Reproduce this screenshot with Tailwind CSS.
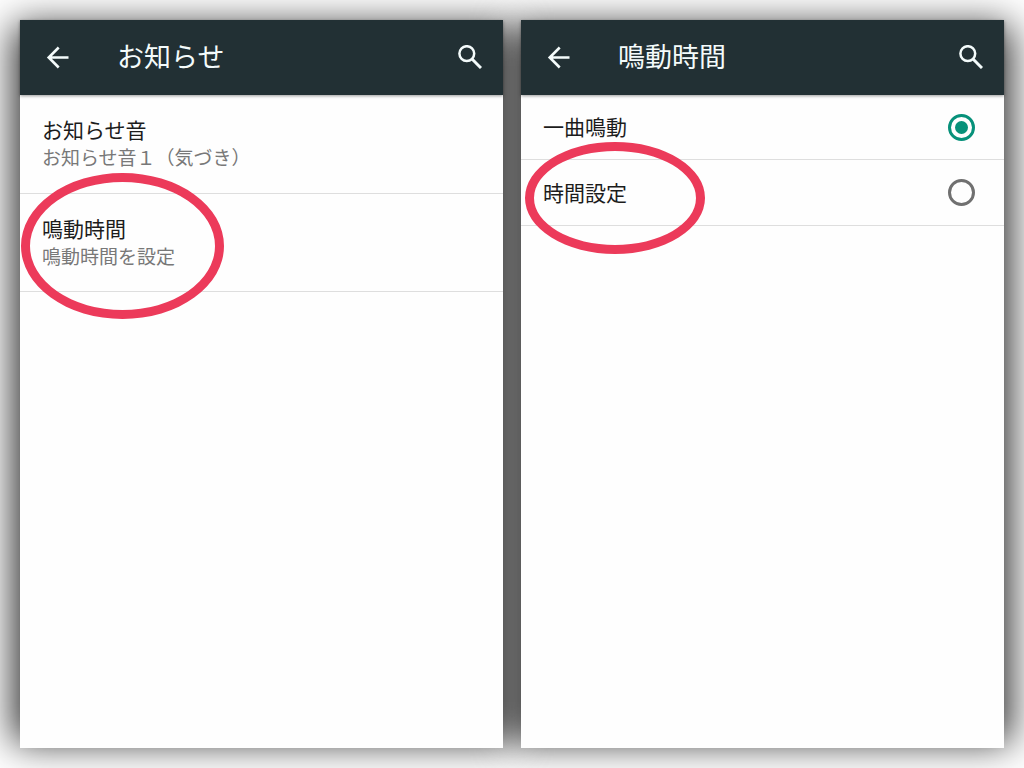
<!DOCTYPE html>
<html lang="ja">
<head>
<meta charset="utf-8">
<meta name="viewport" content="width=device-width, initial-scale=1">
<title>お知らせ</title>
<script src="https://cdn.jsdelivr.net/npm/@tailwindcss/browser@4"></script>
</head>
<body class="bg-white font-['Noto_Sans_CJK_JP',sans-serif] text-[#1c1c1c]">
<main class="isolate grid min-h-screen grid-cols-2 gap-[18px] overflow-hidden p-5">

  <section class="relative flex flex-col bg-[#fefefe] before:absolute before:inset-x-0 before:inset-y-3 before:-z-10 before:shadow-[0_0_36px_7px_rgb(0_0_0/0.82)]">
    <header class="flex h-[75px] items-center bg-[#223034] pr-[21px] pb-[2px] pl-[26px] text-[#f4fbfb] shadow-[0_1px_3px_rgb(0_0_0/0.4)]">
      <button type="button" aria-label="戻る" class="size-6">
        <svg viewBox="0 0 24 24" class="size-6" fill="none" stroke="currentColor" stroke-width="2.6"><path d="M22.5 12.5H3M12.7 2.5 2.7 12.5l10 10"/></svg>
      </button>
      <h1 class="ml-[47px] flex-1 pb-[2px] text-[27px] leading-8">お知らせ</h1>
      <button type="button" aria-label="検索" class="size-6">
        <svg viewBox="0 0 24 24" class="size-6" fill="none" stroke="currentColor"><circle cx="8.8" cy="8.6" r="7.4" stroke-width="2.5"/><path d="m14 14 9 9" stroke-width="3"/></svg>
      </button>
    </header>
    <ul>
      <li class="border-b border-[#dedede]">
        <a href="#sound" class="flex h-[98px] flex-col justify-center px-[22px] pb-[2px]">
          <span class="text-[21px] leading-7">お知らせ音</span>
          <span class="text-[19px] leading-7 text-[#787878]">お知らせ音１（気づき）</span>
        </a>
      </li>
      <li class="relative border-b border-[#dedede]">
        <a href="#duration" class="flex h-[97px] flex-col justify-center px-[22px] pb-[2px]">
          <span class="text-[21px] leading-7">鳴動時間</span>
          <span class="text-[19px] leading-7 text-[#787878]">鳴動時間を設定</span>
        </a>
        <span class="pointer-events-none absolute -top-[21px] left-px h-[146px] w-[203px] rounded-[50%] border-9 border-[#ec3a5a]"></span>
      </li>
    </ul>
  </section>

  <section class="relative flex flex-col bg-[#fefefe] before:absolute before:inset-x-0 before:inset-y-3 before:-z-10 before:shadow-[0_0_36px_7px_rgb(0_0_0/0.82)]">
    <header class="flex h-[75px] items-center bg-[#223034] pr-[21px] pb-[2px] pl-[26px] text-[#f4fbfb] shadow-[0_1px_3px_rgb(0_0_0/0.4)]">
      <button type="button" aria-label="戻る" class="size-6">
        <svg viewBox="0 0 24 24" class="size-6" fill="none" stroke="currentColor" stroke-width="2.6"><path d="M22.5 12.5H3M12.7 2.5 2.7 12.5l10 10"/></svg>
      </button>
      <h2 class="ml-[47px] flex-1 pb-[2px] text-[27px] leading-8">鳴動時間</h2>
      <button type="button" aria-label="検索" class="size-6">
        <svg viewBox="0 0 24 24" class="size-6" fill="none" stroke="currentColor"><circle cx="8.8" cy="8.6" r="7.4" stroke-width="2.5"/><path d="m14 14 9 9" stroke-width="3"/></svg>
      </button>
    </header>
    <div role="radiogroup" aria-label="鳴動時間">
      <div class="flex h-[65px] items-center border-b border-[#dedede] pr-[29px] pl-[22px]">
        <label for="once" class="flex-1 pb-[2px] text-[21px] leading-7">一曲鳴動</label>
        <input id="once" name="duration" type="radio" checked class="size-[27px] appearance-none rounded-full border-3 border-[#707070] bg-clip-content p-1 checked:border-[#07917a] checked:bg-[#07917a]">
      </div>
      <div class="relative flex h-[66px] items-center border-b border-[#dedede] pr-[29px] pl-[22px]">
        <label for="timed" class="flex-1 pb-[2px] text-[21px] leading-7">時間設定</label>
        <input id="timed" name="duration" type="radio" class="size-[27px] appearance-none rounded-full border-3 border-[#707070] bg-clip-content p-1 checked:border-[#07917a] checked:bg-[#07917a]">
        <span class="pointer-events-none absolute -top-[18px] left-1 h-28 w-[180px] rounded-[50%] border-9 border-[#ec3a5a]"></span>
      </div>
    </div>
  </section>

</main>
</body>
</html>
